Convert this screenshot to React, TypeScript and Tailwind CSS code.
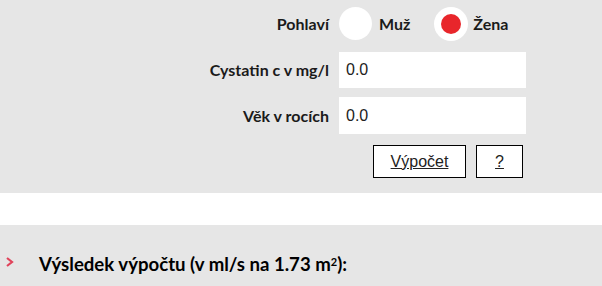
export default function App() {
  const label = "text-right text-[16px] font-bold text-[#1a1a1a] pr-[10px]";
  return (
    <div className="w-[602px] h-[286px] bg-[#e6e6e6] overflow-hidden" style={{ fontFamily: "Lato, 'Open Sans', sans-serif" }}>
      {/* form */}
      <div className="h-[193px] pt-[7px]">
        <div className="grid grid-cols-[339px_187px] items-center">
          <div className={label}>Pohlaví</div>
          <div className="flex items-center h-[33px]">
            <span className="w-[33px] h-[33px] rounded-full bg-white" />
            <span className="ml-[7px] text-[16px] font-bold text-[#1a1a1a]">Muž</span>
            <span className="ml-[24px] w-[34px] h-[34px] rounded-full bg-white flex items-center justify-center">
              <span className="w-[20px] h-[20px] rounded-full bg-[#e8262b]" />
            </span>
            <span className="ml-[5px] text-[16px] font-bold text-[#1a1a1a]">Žena</span>
          </div>

          <div className={`${label} mt-[12px]`}>Cystatin c v mg/l</div>
          <input
            className="mt-[12px] h-[36px] bg-white px-[7px] text-[16px] text-[#222] outline-none"
            style={{ fontFamily: "'Liberation Sans', Arial, sans-serif" }}
            defaultValue="0.0"
          />

          <div className={`${label} mt-[9px]`}>Věk v rocích</div>
          <input
            className="mt-[9px] h-[37px] bg-white px-[7px] text-[16px] text-[#222] outline-none"
            style={{ fontFamily: "'Liberation Sans', Arial, sans-serif" }}
            defaultValue="0.0"
          />

          <div />
          <div className="mt-[11px] flex justify-end gap-[10px] pr-[3px]" style={{ fontFamily: "'Liberation Sans', Arial, sans-serif" }}>
            <button className="w-[93px] h-[33px] bg-white border border-black text-[16px] text-[#222] underline">Výpočet</button>
            <button className="w-[47px] h-[33px] bg-white border border-black text-[16px] text-[#222] underline">?</button>
          </div>
        </div>
      </div>

      <div className="h-[32px] bg-white" />

      {/* result heading */}
      <div className="flex items-center h-[80px] pl-[5px]">
        <svg width="9" height="10" viewBox="0 0 9 10" className="mt-[-6px]">
          <path d="M2 1 L7 5 L2 9" fill="none" stroke="#e0435a" strokeWidth="2.2" />
        </svg>
        <h2 className="ml-[25px] text-[18.6px] font-bold text-black">
          Výsledek výpočtu (v ml/s na 1.73 m<sup className="text-[11px]">2</sup>):
        </h2>
      </div>
    </div>
  );
}
